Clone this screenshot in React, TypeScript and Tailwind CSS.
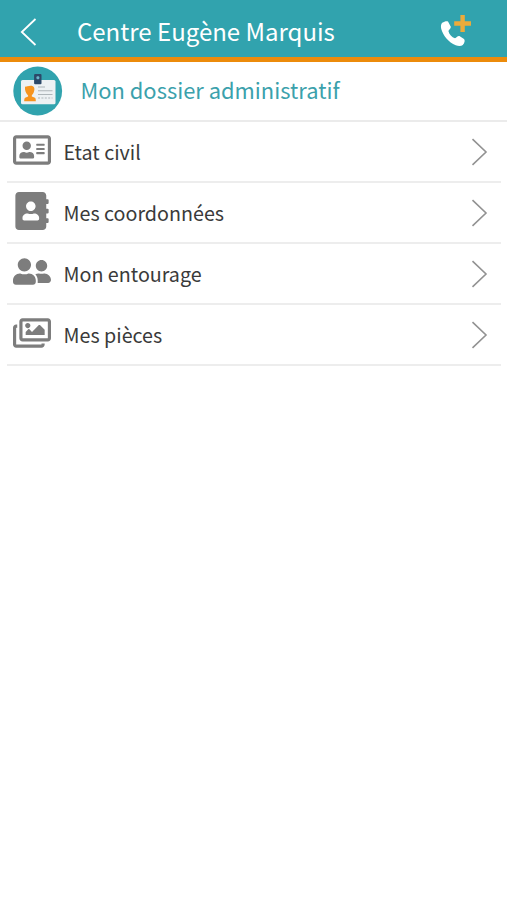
import React from "react";
import { FaAddressBook, FaRegAddressCard, FaRegImages, FaUserFriends } from "react-icons/fa";

const items = [
  { label: "Etat civil", icon: <FaRegAddressCard className="w-[38px] h-[34px]" /> },
  { label: "Mes coordonnées", icon: <FaAddressBook className="w-[34px] h-[38px]" /> },
  { label: "Mon entourage", icon: <FaUserFriends className="w-[38px] h-[31px] mb-[1px]" /> },
  { label: "Mes pièces", icon: <FaRegImages className="w-[38px] h-[34px]" /> },
];

function PhoneIcon() {
  return (
    <svg className="w-[32px] h-[34px]" viewBox="0 0 32 34" fill="none">
      <path
        d="M2.6 7.6C4 6.6 6.8 5.6 8 6.6L10.8 11.8C11 13.5 9 14.6 8.4 16C9.2 19.3 11.8 22.2 15 23.3C16.3 22.9 17.6 20.7 19.4 21.1L24 24.1C25.4 25.6 24.3 28.6 22.8 30.1C21.2 31.4 18.2 31.3 15.7 30.3C8.6 27.4 3 20.7 1.2 13.8C0.6 11.2 1 8.7 2.6 7.6Z"
        fill="#fff"
      />
      <path d="M22.6 0V17M14.2 8.5H31" stroke="#ebab3b" strokeWidth="4.4" />
    </svg>
  );
}

function BadgeIcon() {
  return (
    <svg className="w-[50px] h-[50px]" viewBox="0 0 50 50" fill="none">
      <circle cx="24.7" cy="25" r="24.4" fill="#31a3ae" />
      <rect x="8" y="14" width="34.5" height="24.3" rx="1.5" fill="#edf1f3" />
      <rect x="21.1" y="8" width="7.4" height="10.2" rx="1" fill="#2c4868" />
      <rect x="23.5" y="10.3" width="2.8" height="3" rx="1" fill="#6bb5c9" />
      <path
        d="M12 21.3C12 19.8 13.6 20.7 14.6 20.3C17 19.3 20.4 19.5 21.1 21.4C21.6 23 21.4 24 21 25.6C20.6 27.4 19.6 28.6 18.8 29.4V30.6L22 31.8C22.7 32.4 22.8 33.8 22.8 35.2H11.2C11.2 33.8 11.4 32.4 12.1 31.8L15.1 30.6V29.4C13 27.7 11.6 24.2 12 21.3Z"
        fill="#f7941e"
      />
      <path d="M25 21H32M25 24.8H39.5M25 28.5H39.5" stroke="#aeb5b9" strokeWidth="1.1" />
      <path d="M25 32H39.5" stroke="#aeb5b9" strokeWidth="1.1" strokeDasharray="2 1.4" />
    </svg>
  );
}

function Chevron() {
  return (
    <svg className="w-[17px] h-[28px]" viewBox="0 0 17 28" fill="none">
      <path d="M1.5 1.2L15 14L1.5 26.8" stroke="#929292" strokeWidth="1.6" />
    </svg>
  );
}

export default function App() {
  return (
    <div className="min-h-screen bg-white font-['Noto_Sans_CJK_SC',sans-serif]">
      {/* Header */}
      <header className="flex items-center h-[62px] bg-[#31a3ae] border-b-5 border-[#ec8b0b] pl-5 pr-[35px]">
        <button type="button" className="w-[57px] pt-[7px]">
          <svg className="w-[17px] h-[28px]" viewBox="0 0 17 28" fill="none">
            <path d="M15.5 1L1.8 14L15.5 27" stroke="#fff" strokeWidth="1.8" />
          </svg>
        </button>
        <h1 className="flex-1 pt-[5px] text-[24px] leading-[32px] text-white whitespace-nowrap">Centre Eugène Marquis</h1>
        <button type="button" className="pt-[6px]">
          <PhoneIcon />
        </button>
      </header>
      {/* Title */}
      <div className="flex items-center h-[60px] pl-[12.5px] border-b-2 border-[#ebebeb]">
        <BadgeIcon />
        <h2 className="pl-[18px] pb-[2px] text-[21.9px] leading-[30px] text-[#3ba1ac]">Mon dossier administratif</h2>
      </div>
      {/* Menu */}
      <ul className="pl-[7px] pr-[6px]">
        {items.map((item) => (
          <li key={item.label} className="flex items-center h-[61px] border-b-2 border-[#ededed] pr-[13px]">
            <span className="flex justify-center w-[50px] pb-[4px] text-[#7d7d7d]">{item.icon}</span>
            <span className="flex-1 pl-[6.5px] text-[19.7px] leading-[28px] text-[#3a3a3a]">{item.label}</span>
            <Chevron />
          </li>
        ))}
      </ul>
    </div>
  );
}
